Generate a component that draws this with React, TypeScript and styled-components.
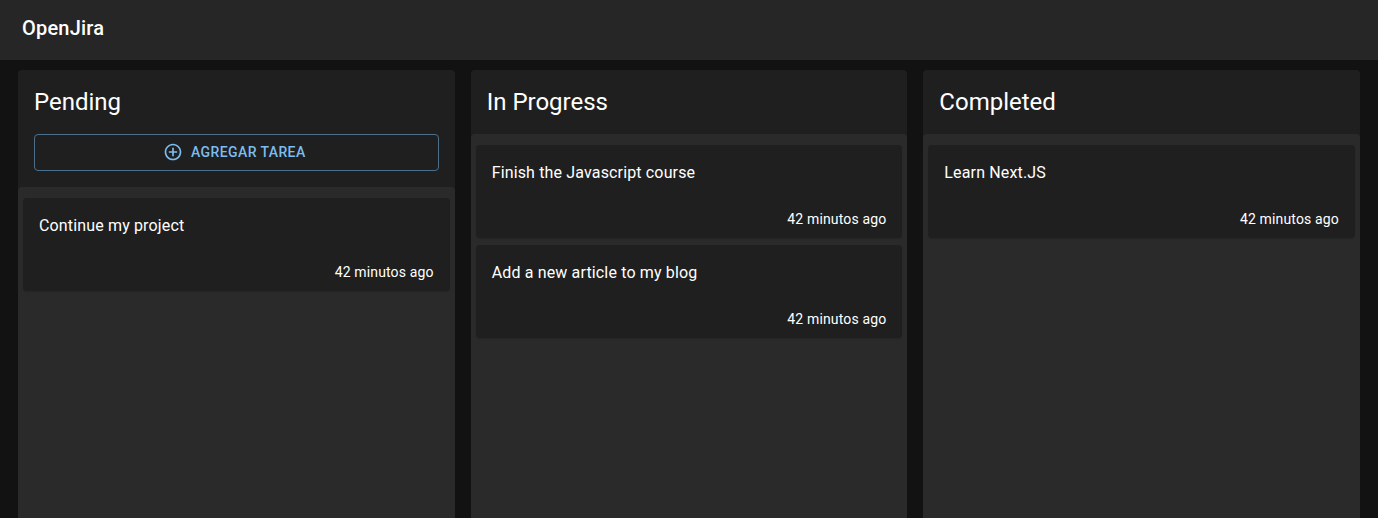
import React from 'react';
import styled, { createGlobalStyle } from 'styled-components';

const GlobalStyle = createGlobalStyle`
  *, *::before, *::after { box-sizing: border-box; }
  body {
    margin: 0;
    overflow: hidden;
    background: #121212;
    color: #fff;
    font-family: Roboto, "Liberation Sans", sans-serif;
    -webkit-font-smoothing: antialiased;
  }
`;

const Page = styled.div`
  display: flex;
  flex-direction: column;
  height: 100vh;
  overflow: hidden;
`;

const AppBar = styled.header`
  flex: none;
  display: flex;
  align-items: center;
  height: 60px;
  padding: 0 22px 4px;
  background: #262626;
`;

const Brand = styled.h1`
  margin: 0;
  font-size: 20px;
  font-weight: 500;
  line-height: 32px;
  letter-spacing: 0.2px;
`;

const Board = styled.main`
  flex: 1;
  min-height: 0;
  display: grid;
  grid-template-columns: repeat(3, 1fr);
  gap: 16px;
  padding: 10px 18px 0;
`;

const Column = styled.section`
  display: flex;
  flex-direction: column;
  min-height: 0;
  border-radius: 4px 4px 0 0;
  background: #1f1f1f;
`;

const ColumnTitle = styled.h2`
  margin: 0;
  padding: 16px;
  font-size: 24px;
  font-weight: 400;
  line-height: 32px;
`;

const AddButton = styled.button`
  flex: none;
  display: flex;
  align-items: center;
  justify-content: center;
  gap: 8px;
  height: 37px;
  margin: 0 16px 16px;
  padding: 0 15px;
  border: 1px solid #4c6f8b;
  border-radius: 4px;
  background: transparent;
  color: #7cbdf0;
  font: 500 14px/24.5px Roboto, "Liberation Sans", sans-serif;
  letter-spacing: 0.4px;
  text-transform: uppercase;

  svg {
    margin: 0 0 1px -4px;
  }
`;

const TaskList = styled.div`
  flex: 1;
  display: flex;
  flex-direction: column;
  gap: 7px;
  padding: 11px 5px 0;
  border-radius: 4px 4px 0 0;
  background: #2a2a2a;
`;

const Task = styled.article`
  display: flex;
  flex-direction: column;
  justify-content: space-between;
  height: 93px;
  padding: 16px 16px 9px;
  border-radius: 4px;
  background: #1f1f1f;
  box-shadow: 0 1px 1px rgba(0, 0, 0, 0.12);
`;

const TaskText = styled.p`
  margin: 0;
  font-size: 16px;
  line-height: 24px;
  letter-spacing: 0.15px;
`;

const TaskTime = styled.time`
  align-self: flex-end;
  font-size: 14px;
  line-height: 20px;
  letter-spacing: 0.15px;
`;

const AddIcon = () => (
  <svg width="20" height="20" viewBox="0 0 24 24" fill="currentColor" aria-hidden="true">
    <path d="M13 7h-2v4H7v2h4v4h2v-4h4v-2h-4V7zm-1-5C6.48 2 2 6.48 2 12s4.48 10 10 10 10-4.48 10-10S17.52 2 12 2zm0 18c-4.41 0-8-3.59-8-8s3.59-8 8-8 8 3.59 8 8-3.59 8-8 8z" />
  </svg>
);

interface ColumnData {
  title: string;
  canAdd?: boolean;
  tasks: string[];
}

const columns: ColumnData[] = [
  { title: 'Pending', canAdd: true, tasks: ['Continue my project'] },
  { title: 'In Progress', tasks: ['Finish the Javascript course', 'Add a new article to my blog'] },
  { title: 'Completed', tasks: ['Learn Next.JS'] },
];

export default function App() {
  return (
    <Page>
      <GlobalStyle />
      <AppBar>
        <Brand>OpenJira</Brand>
      </AppBar>
      <Board>
        {columns.map(({ title, canAdd, tasks }) => (
          <Column key={title}>
            <ColumnTitle>{title}</ColumnTitle>
            {canAdd && (
              <AddButton type="button">
                <AddIcon />
                Agregar tarea
              </AddButton>
            )}
            <TaskList>
              {tasks.map((text) => (
                <Task key={text}>
                  <TaskText>{text}</TaskText>
                  <TaskTime>42 minutos ago</TaskTime>
                </Task>
              ))}
            </TaskList>
          </Column>
        ))}
      </Board>
    </Page>
  );
}
